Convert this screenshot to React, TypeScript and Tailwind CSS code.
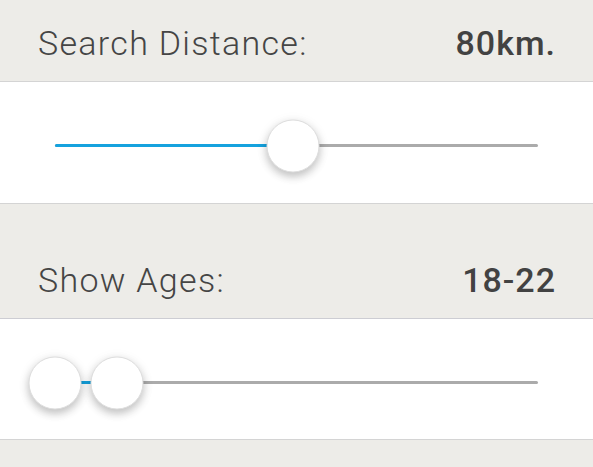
import React from "react";

function Thumb({ left }: { left: string }) {
  return (
    <div
      className="absolute top-1/2 w-[53px] h-[53px] -translate-x-1/2 -translate-y-1/2 rounded-full bg-white border border-[#dedede] shadow-[0_4px_8px_rgba(0,0,0,0.22),0_2px_14px_rgba(0,0,0,0.06)]"
      style={{ left }}
    />
  );
}

function Slider({ from, to, thumbs }: { from: number; to: number; thumbs: number[] }) {
  return (
    <div className="relative mx-[55px] h-[3px]">
      <div className="absolute inset-0 rounded-full bg-[#ababab]" />
      <div
        className="absolute top-0 h-[3px] rounded-full bg-[#15a2de]"
        style={{ left: `${from}%`, width: `${to - from}%` }}
      />
      {thumbs.map((t, i) => (
        <Thumb key={i} left={`${t}%`} />
      ))}
    </div>
  );
}

const label = "text-[34px] leading-[34px] font-light text-[#454545] tracking-[1.3px]";
const value = "text-[34px] leading-[34px] font-medium text-[#424242] tracking-[1px]";

export default function App() {
  return (
    <div className="w-[593px] h-[467px] overflow-hidden bg-[#edece8] font-['Roboto','Liberation_Sans',sans-serif]">
      <div className="h-[82px] flex items-end justify-between pl-[38px] pr-[37px] pb-[21px] border-b border-[#d4d4d4] bg-[#edece8]">
        <span className={label}>Search Distance:</span>
        <span className={value}>80km.</span>
      </div>
      <div className="h-[122px] bg-white border-b border-[#d4d4d4] flex flex-col pt-[62px]">
        <Slider from={0} to={49.3} thumbs={[49.3]} />
      </div>
      <div className="h-[115px] flex items-end justify-between pl-[38px] pr-[37px] pb-[21px] border-b border-[#cdcdd3] bg-[#edece8]">
        <span className={label}>Show Ages:</span>
        <span className={value}>18-22</span>
      </div>
      <div className="h-[121px] bg-white border-b border-[#d4d4d4] flex flex-col pt-[62px]">
        <Slider from={0} to={12.8} thumbs={[0, 12.8]} />
      </div>
      <div className="h-[40px] bg-[#edece8]" />
    </div>
  );
}
